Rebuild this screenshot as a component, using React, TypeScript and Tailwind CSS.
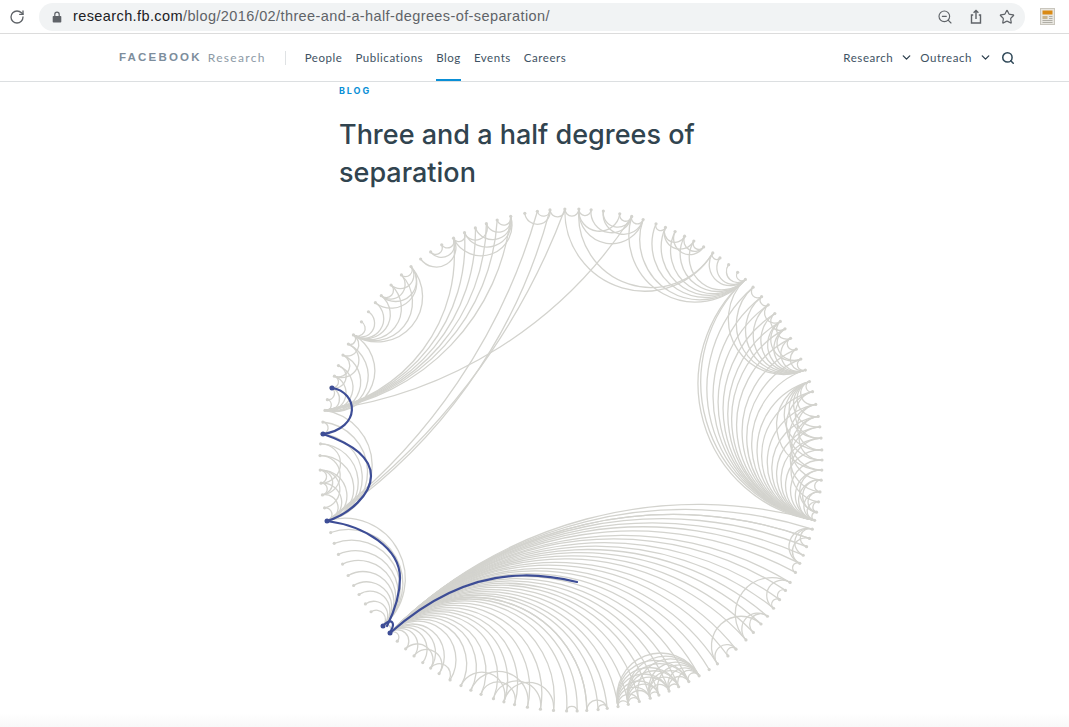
import { ChevronDown, RotateCw, Search, Star, ZoomOut } from 'lucide-react';

const CX = 571;
const CY = 460;
const R = 251;

// node angles in degrees, clockwise from +x, read off the picture
const NODES = [
  0, 2.3, 4.6, 7.3, 9.6, 12, 13.9, 16, 18.2, 20.2, 22.3, 24.3, 26.6, 29.2, 31.3, 33.8, 36.2, 38.5, 40.8, 43.4, 45.8, 48.9,
  51.3, 54.3, 56.6, 59.3, 62, 64.6, 67, 69.5, 71.6, 74.2, 76.8, 79.2, 81.7, 83.8, 86.4, 88.6, 91, 94, 97, 100, 103, 105.5,
  108, 111, 113.5, 116, 118.8, 121.7, 124, 126.2, 128.7, 131.2, 133.8, 136.3, 138.6, 142.8, 145, 147.6, 150, 152.6, 155.5,
  157.9, 160.6, 163.2, 166, 169, 172, 174.7, 177.7, 181, 183.7, 186, 188.7, 191.4, 193.9, 196.8, 199.5, 202.1, 204.7,
  207.5, 209.9, 213.4, 216.2, 218.8, 220.9, 224.2, 227.5, 230.4, 233.2, 236, 239, 242.1, 244.9, 247.6, 250.3, 252.9, 256.1,
  259.4, 262.3, 265.2, 268.6, 271.8, 274.6, 277.4, 281.2, 284, 286.7, 289.8, 292.1, 294.5, 296.9, 299.3, 301.9, 304.4,
  306.4, 308.9, 311.6, 314, 316.5, 319.4, 321.8, 324.3, 326.5, 328.5, 331, 333.8, 336.3, 339, 341.8, 344.2, 347.2, 350,
  352.4, 355, 357.7,
];

type Link = [number, number, number?];

const range = (from: number, to: number) => NODES.filter((a) => a >= from && a <= to);
const fan = (hub: number, list: number[], k?: number) => list.filter((a) => a !== hub).map((a): Link => [hub, a, k]);

const LINKS: Link[] = [
  // big fan across the bottom
  ...fan(136.3, range(13.9, 118.8), 1.06),
  [136.3, 18.2, 1.06], [136.3, 86.4, 1.06],
  ...fan(136.3, range(119, 133.8)),
  [119, 124], [121.7, 128.7], [124, 131.2], [113.5, 100], [111, 103], [108, 97], [105.5, 94], [116, 105.5],
  // arch group near the bottom right
  ...fan(79.2, range(59.3, 76.8)),
  ...fan(59.3, range(62, 76.8)),
  ...fan(76.8, range(62, 74.2)),
  ...fan(71.6, range(62, 69.5)),
  ...fan(67, [62, 64.6]),
  [54.3, 40.8], [54.3, 48.9], [51.3, 48.9], [45.8, 29.2], [45.8, 38.5], [43.4, 38.5], [36.2, 33.8], [36.2, 29.2], [33.8, 31.3],
  [24.3, 16], [22.3, 16], [20.2, 16], [24.3, 18.2], [26.6, 24.3], [86.4, 81.7], [83.8, 81.7], [88.6, 91],
  // right side fan
  ...fan(13.9, range(316.5, 360), 1.05),
  ...fan(13.9, range(0, 12)),
  [13.9, 314, 1.1], [13.9, 314, 1.06],
  ...fan(341.8, range(344.2, 357.7)),
  [341.8, 2.3], [344.2, 0], [347.2, 2.3], [350, 4.6], [352.4, 7.3], [355, 9.6], [344.2, 355], [347.2, 357.7], [350, 0], [4.6, 7.3],
  [2.3, 12], [4.6, 12], [7.3, 12], [9.6, 12],
  // top right
  ...fan(314, range(284, 299.3)),
  [314, 304.4], [314, 306.4], [314, 308.9], [314, 311.6], [304.4, 268.6], [304.4, 271.8], [304.4, 306.4],
  [301.9, 294.5], [301.9, 296.9], [301.9, 299.3], [299.3, 292.1], [296.9, 292.1], [292.1, 289.8],
  [286.7, 271.8], [284, 274.6], [284, 277.4], [284, 281.2], [286.7, 277.4], [281.2, 271.8], [286.7, 284], [271.8, 274.6], [268.6, 271.8],
  ...fan(339, range(314, 336.3)),
  [336.3, 326.5], [336.3, 328.5], [333.8, 331], [331, 326.5], [328.5, 324.3], [326.5, 321.8], [321.8, 319.4], [319.4, 316.5],
  // top left, these run much flatter than the true geodesic
  ...fan(191.4, range(240, 256.1), 0.62),
  [191.4, 284, 0.55],
  ...fan(256.1, range(242.1, 252.9)),
  [233.2, 242.1], [236, 239], [239, 242.1], [236, 242.1], [242.1, 244.9], [244.9, 250.3],
  ...fan(230.4, range(218.8, 227.5)),
  [227.5, 220.9], [224.2, 220.9],
  ...fan(209.9, range(213.4, 230.4)),
  ...fan(209.9, range(204.7, 207.5)),
  ...fan(191.4, range(193.9, 209.9)),
  [207.5, 199.5], [204.7, 199.5], [202.1, 196.8], [199.5, 196.8], [193.9, 196.8],
  // long ones from the left hub, plus the left side
  [166, 262.3, 0.42], [166, 265.2, 0.5], [166, 268.6, 0.42],
  [259.4, 265.2], [262.3, 265.2], [265.2, 268.6],
  ...fan(166, range(169, 191.4)),
  ...fan(177.7, range(169, 174.7)),
  [181, 172], [183.7, 174.7], [186, 188.7], [174.7, 172],
  ...fan(138.6, range(142.8, 166)),
  [136.3, 138.6],
];

const BLUE_PATHS = [
  'M332 388 C358 392 362 428 323 434',
  'M323 434 C347 442 371 455 371 476 C371 494 350 514 327 521',
  'M327 521 C365 526 400 548 400 578 C400 595 394 612 387 626',
  'M383 626 C388 620 393 620 393 625 C393 628 391 630 390 633',
  'M390 633 C425 602 470 576 523 575.5 C545 575 560 578 577 582',
];
const BLUE_DOTS = [[332, 388], [323, 434], [327, 521], [383, 626], [390, 633]];

const pt = (deg: number, rad = R) => {
  const t = (deg * Math.PI) / 180;
  return [CX + rad * Math.cos(t), CY + rad * Math.sin(t)];
};

function arc(a: number, b: number, k?: number) {
  const [x1, y1] = pt(a);
  const [x2, y2] = pt(b);
  let sep = Math.abs(a - b);
  if (sep > 180) sep = 360 - sep;
  const half = (sep * Math.PI) / 360;
  const chord = 2 * R * Math.sin(half);
  const geo = R * Math.tan(half);
  const bend = k ?? 1 + 0.1 * Math.min(1, sep / 60);
  const sag = (geo - Math.sqrt(Math.max(geo * geo - (chord * chord) / 4, 0))) * bend;
  const r = (chord * chord) / 4 / (2 * sag) + sag / 2;
  // bend towards the centre of the disc
  const cross = (x2 - x1) * (CY - y1) - (y2 - y1) * (CX - x1);
  const sweep = cross > 0 ? 0 : 1;
  return `M${x1.toFixed(1)} ${y1.toFixed(1)} A${r.toFixed(1)} ${r.toFixed(1)} 0 0 ${sweep} ${x2.toFixed(1)} ${y2.toFixed(1)}`;
}

function Graph() {
  return (
    <svg viewBox="300 200 540 513" width={540} height={513} className="block shrink-0">
      <g fill="none" stroke="#d3d3ce" strokeWidth={1.3} strokeLinecap="round">
        {LINKS.map(([a, b, k], i) => (
          <path key={i} d={arc(a, b, k)} />
        ))}
      </g>
      <g fill="#d3d3ce">
        {NODES.map((a) => {
          const [x, y] = pt(a);
          return <circle key={a} cx={x} cy={y} r={1.6} />;
        })}
      </g>
      <g fill="none" stroke="#3d4d96" strokeWidth={2.2} strokeLinecap="round">
        {BLUE_PATHS.map((d) => (
          <path key={d} d={d} />
        ))}
      </g>
      <g fill="#3d4d96">
        {BLUE_DOTS.map(([x, y]) => (
          <circle key={x} cx={x} cy={y} r={2.5} />
        ))}
      </g>
    </svg>
  );
}

function BrowserBar() {
  return (
    <div className="flex h-[34px] items-center border-b border-[#dcdcdc] bg-white pl-[9px]">
      <RotateCw size={16} strokeWidth={2} className="text-[#5f6368]" />
      <div className="ml-[14px] flex h-[28px] w-[986px] items-center rounded-full bg-[#f1f3f4] pl-[12px]">
        <svg width="12" height="12" viewBox="0 0 12 12" className="shrink-0">
          <path d="M2.5 5h7a.8.8 0 0 1 .8.8v5a.8.8 0 0 1-.8.8h-7a.8.8 0 0 1-.8-.8v-5a.8.8 0 0 1 .8-.8z" fill="#5f6368" />
          <path d="M3.800 5V3.400a2.200 2.200 0 0 1 4.400 0V5" fill="none" stroke="#5f6368" strokeWidth="1.2" />
        </svg>
        <span className="ml-[10px] font-['Liberation_Sans',sans-serif] text-[14.5px] tracking-[0.4px] whitespace-nowrap text-[#5f6368]">
          <span className="text-[#202124]">research.fb.com</span>/blog/2016/02/three-and-a-half-degrees-of-separation/
        </span>
        <div className="ml-auto flex items-center gap-[15px] pr-[10px] text-[#5f6368]">
          <ZoomOut size={16} strokeWidth={1.7} />
          <svg width="16" height="16" viewBox="0 0 16 16" fill="none" stroke="#5f6368" strokeWidth="1.4">
            <path d="M5.200 6H3.500v8h9V6h-1.700" />
            <path d="M8 10V1.500M5.600 3.800 8 1.500l2.400 2.300" />
          </svg>
          <Star size={16} strokeWidth={1.8} />
        </div>
      </div>
      <svg width="15" height="17" viewBox="0 0 15 17" className="ml-[15px] shrink-0">
        <rect x="0.5" y="0.5" width="14" height="16" fill="#e8e6e0" stroke="#c9c6bd" />
        <rect x="2.5" y="2.5" width="10" height="4" fill="#d98a14" />
        <rect x="2.5" y="8" width="5" height="3" fill="#c8b48c" />
        <path d="M9 8.500h3.500M9 10.500h3.500M2.500 12.500h10M2.500 14.500h10" stroke="#b0aea6" strokeWidth="1" />
      </svg>
    </div>
  );
}

function NavBar() {
  const navCls = "font-['Lato',sans-serif] text-[11.5px] tracking-[0.55px] text-[#3e5263]";
  return (
    <div className="flex h-[48px] items-center border-b border-[#dcdfe1] bg-white pl-[119px] pr-[54px]">
      <span className="font-['Liberation_Sans',sans-serif] text-[11.5px] font-bold tracking-[2.2px] text-[#7d8d9c]">FACEBOOK</span>
      <span className="ml-[6px] font-['Lato',sans-serif] text-[12px] tracking-[1.3px] text-[#8d9aa6]">Research</span>
      <div className="ml-[19px] h-[14px] w-px bg-[#dfe2e4]" />
      <div className="ml-[19px] flex h-full items-center gap-[13px]">
        <a className={navCls}>People</a>
        <a className={navCls}>Publications</a>
        <a className={`${navCls} flex h-full items-center border-b-2 border-[#0a8fd6] pt-[2px]`}>Blog</a>
        <a className={navCls}>Events</a>
        <a className={navCls}>Careers</a>
      </div>
      <div className="ml-auto flex items-center">
        <a className={navCls}>Research</a>
        <ChevronDown size={13} strokeWidth={2.4} className="ml-[7px] text-[#2b3d4c]" />
        <a className={`${navCls} ml-[7px]`}>Outreach</a>
        <ChevronDown size={13} strokeWidth={2.4} className="ml-[7px] text-[#2b3d4c]" />
        <Search size={14} strokeWidth={2.6} className="ml-[9px] text-[#2f4858]" />
      </div>
    </div>
  );
}

export default function App() {
  return (
    <div className="h-[727px] w-[1069px] overflow-hidden bg-white">
      <BrowserBar />
      <NavBar />
      <div className="pl-[339px] pt-[2px]">
        <div className="font-['Inter',sans-serif] text-[9px] font-bold tracking-[1.9px] text-[#0a8fd6]">BLOG</div>
        <h1 className="mt-[18px] w-[400px] font-['Inter',sans-serif] text-[27px] leading-[38px] font-medium text-[#31444f]">
          Three and a half degrees of separation
        </h1>
      </div>
      <div className="pl-[300px] pt-[8px]">
        <Graph />
      </div>
      <div className="h-[14px] bg-gradient-to-b from-white to-[#f8f8f8]" />
    </div>
  );
}
